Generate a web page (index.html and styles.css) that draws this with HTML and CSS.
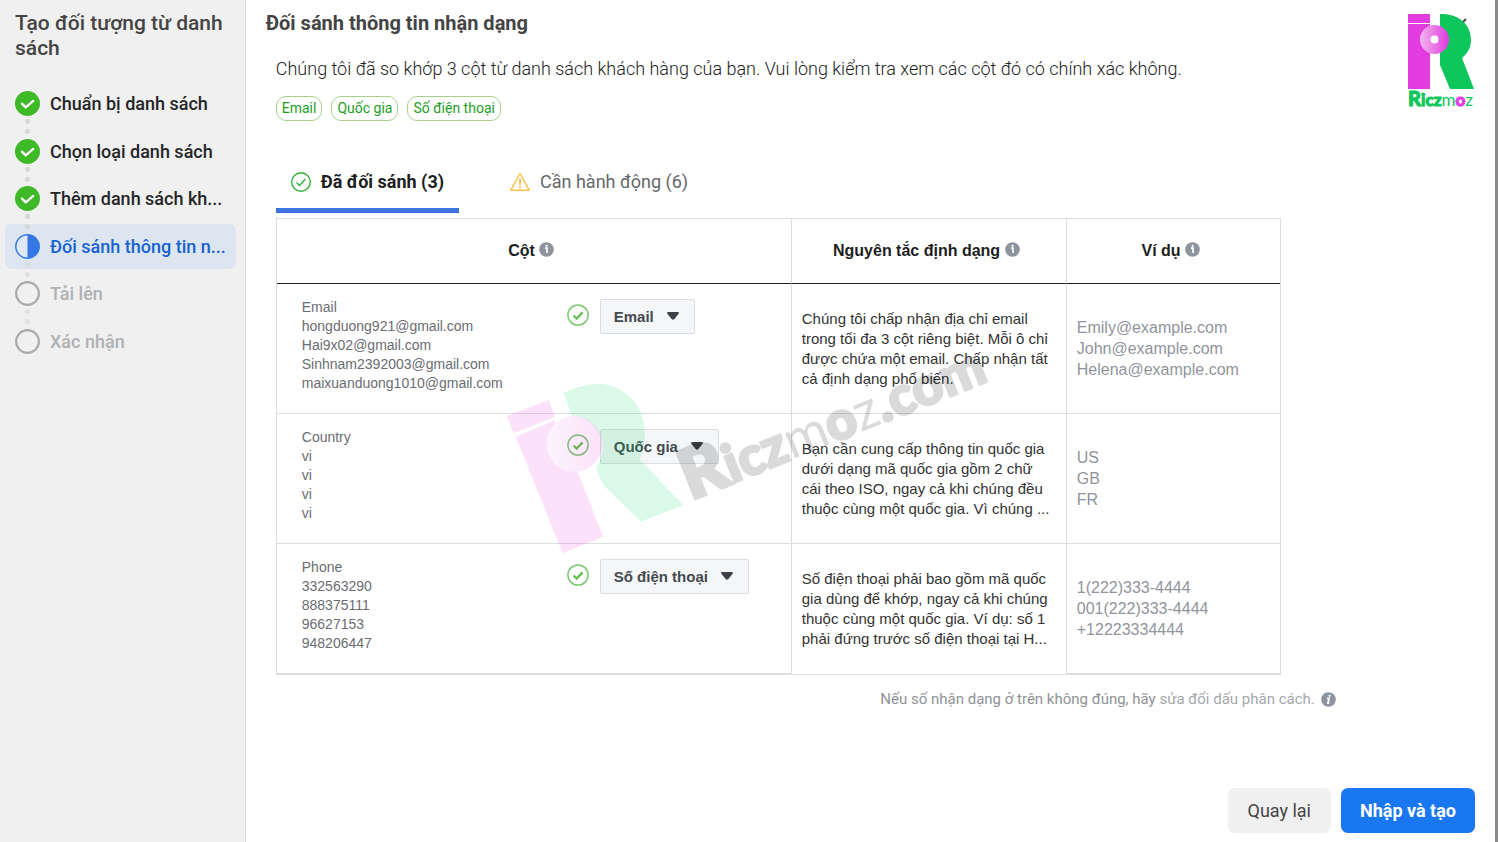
FILE: index.html
```html
<!DOCTYPE html>
<html lang="vi">
<head>
<meta charset="utf-8">
<meta name="viewport" content="width=device-width, initial-scale=1">
<title>Đối sánh thông tin nhận dạng</title>
<link rel="stylesheet" href="styles.css">
</head>
<body>
<svg class="defs" width="0" height="0" aria-hidden="true">
  <symbol id="done" viewBox="0 0 25 25"><circle cx="12.5" cy="12.5" r="12.5" fill="#3fb927"/><path d="M7 12.6l3.8 3.8 7.4-6.5" fill="none" stroke="#fff" stroke-width="2.3" stroke-linecap="round" stroke-linejoin="round"/></symbol>
  <symbol id="half" viewBox="0 0 25 25"><circle cx="12.5" cy="12.5" r="11.7" fill="#dfe9f7" stroke="#3578e5" stroke-width="1.5"/><path d="M12.5 0.8a11.7 11.7 0 0 1 0 23.4z" fill="#3578e5"/></symbol>
  <symbol id="todo" viewBox="0 0 25 25"><circle cx="12.5" cy="12.5" r="11.4" fill="none" stroke="#a9abae" stroke-width="2.2"/></symbol>
  <symbol id="info" viewBox="0 0 15 15"><circle cx="7.5" cy="7.5" r="7.3" fill="#8d949e"/><path d="M6 6.200h2v4.800" fill="none" stroke="#fff" stroke-width="1.700"/><circle cx="7.6" cy="3.8" r="1.1" fill="#fff"/></symbol>
  <symbol id="info-slant" viewBox="0 0 15 15"><circle cx="7.5" cy="7.5" r="7.3" fill="#8d949e"/><path d="M6 6.400h2l-1.100 4.800h1.400" fill="none" stroke="#fff" stroke-width="1.700"/><circle cx="8.600" cy="3.8" r="1.1" fill="#fff"/></symbol>
  <symbol id="ok" viewBox="0 0 22 22"><circle cx="11" cy="11" r="10.1" fill="none" stroke="#7cc873" stroke-width="1.5"/><path d="M6.6 11.5l3 3 6-6.2" fill="none" stroke="#67c253" stroke-width="2.4"/></symbol>
  <symbol id="caret" viewBox="0 0 12 8"><path d="M1.2 0h9.6q1.8.3.8 1.8L7.4 7.1q-1.4 1.4-2.8 0L.4 1.8Q-.6.3 1.2 0z" fill="#3d4046"/></symbol>
</svg>
<div class="app">
  <aside class="sidebar">
    <h2 class="sidebar-title">Tạo đối tượng từ danh sách</h2>
    <ol class="steps">
      <li class="step"><svg class="step-icon"><use href="#done"/></svg><span>Chuẩn bị danh sách</span></li>
      <li class="step"><svg class="step-icon"><use href="#done"/></svg><span>Chọn loại danh sách</span></li>
      <li class="step"><svg class="step-icon"><use href="#done"/></svg><span>Thêm danh sách kh...</span></li>
      <li class="step step-active" aria-current="step"><svg class="step-icon"><use href="#half"/></svg><span>Đối sánh thông tin n...</span></li>
      <li class="step step-next"><svg class="step-icon"><use href="#todo"/></svg><span>Tải lên</span></li>
      <li class="step step-next"><svg class="step-icon"><use href="#todo"/></svg><span>Xác nhận</span></li>
    </ol>
  </aside>
  <main class="main">
    <header class="header">
      <h1 class="title">Đối sánh thông tin nhận dạng</h1>
      <button class="close" type="button" aria-label="Đóng"><svg width="12" height="12" viewBox="0 0 12 12"><path d="M1 1l10 10M11 1L1 11" stroke="#444950" stroke-width="2"/></svg></button>
      <svg class="logo" width="70" height="96" viewBox="0 0 70 96" role="img" aria-label="Riczmoz">
        <defs><linearGradient id="disc"><stop offset="0" stop-color="#f3b5ef"/><stop offset="1" stop-color="#e03ade"/></linearGradient></defs>
        <path d="M0 2h22v9H0zM0 12h22v65H0z" fill="#e23be0"/>
        <path d="M31 2c18-1 32 9 32 26 0 7-3 13-9 18l12 31H42L32 53V2z" fill="#0dc65c"/>
        <circle cx="26.500" cy="27.500" r="14.500" fill="url(#disc)"/><circle cx="26.500" cy="27.500" r="4" fill="#fff"/>
        <text class="logo-text" y="94"><tspan class="logo-big">R</tspan><tspan class="logo-heavy">icz</tspan><tspan>m</tspan><tspan class="logo-heavy logo-pink">o</tspan><tspan>z</tspan></text>
      </svg>
    </header>
    <div class="content">
      <p class="intro">Chúng tôi đã so khớp 3 cột từ danh sách khách hàng của bạn. Vui lòng kiểm tra xem các cột đó có chính xác không.</p>
      <div class="tags"><span class="tag">Email</span><span class="tag">Quốc gia</span><span class="tag">Số điện thoại</span></div>
      <div class="tabs" role="tablist">
        <button class="tab tab-on" type="button" role="tab" aria-selected="true"><svg width="20" height="20" viewBox="0 0 20 20" fill="none" stroke="#31b237" stroke-width="1.4"><circle cx="10" cy="10" r="9.300"/><path d="M5.500 10.500l3 3 6-6.500"/></svg>Đã đối sánh (3)</button>
        <button class="tab" type="button" role="tab" aria-selected="false"><svg width="20" height="20" viewBox="0 0 20 20" fill="none" stroke="#f7c34b" stroke-width="1.5" stroke-linejoin="round"><path d="M10 1.500L19.200 18.200H.8z"/><path d="M10 6.500v6.500M10 14.300v2" stroke-width="1.800"/></svg>Cần hành động (6)</button>
      </div>
      <div class="table-area">
        <table class="table">
          <colgroup><col class="col-source"><col class="col-rule"><col></colgroup>
          <thead><tr>
            <th scope="col">Cột <svg class="info"><use href="#info"/></svg></th>
            <th scope="col">Nguyên tắc định dạng <svg class="info"><use href="#info"/></svg></th>
            <th scope="col">Ví dụ <svg class="info"><use href="#info"/></svg></th>
          </tr></thead>
          <tbody>
            <tr>
              <td class="source"><div class="source-row">
                <div class="values">Email<br>hongduong921@gmail.com<br>Hai9x02@gmail.com<br>Sinhnam2392003@gmail.com<br>maixuanduong1010@gmail.com</div>
                <svg class="ok"><use href="#ok"/></svg>
                <div class="picker"><select aria-label="Loại cột Email"><option>Email</option></select><svg class="caret"><use href="#caret"/></svg></div>
              </div></td>
              <td class="rule">Chúng tôi chấp nhận địa chỉ email<br>trong tối đa 3 cột riêng biệt. Mỗi ô chỉ<br>được chứa một email. Chấp nhận tất<br>cả định dạng phổ biến.</td>
              <td class="example">Emily@example.com<br>John@example.com<br>Helena@example.com</td>
            </tr>
            <tr>
              <td class="source"><div class="source-row">
                <div class="values">Country<br>vi<br>vi<br>vi<br>vi</div>
                <svg class="ok"><use href="#ok"/></svg>
                <div class="picker"><select aria-label="Loại cột Country"><option>Quốc gia</option></select><svg class="caret"><use href="#caret"/></svg></div>
              </div></td>
              <td class="rule">Bạn cần cung cấp thông tin quốc gia<br>dưới dạng mã quốc gia gồm 2 chữ<br>cái theo ISO, ngay cả khi chúng đều<br>thuộc cùng một quốc gia. Vì chúng ...</td>
              <td class="example">US<br>GB<br>FR</td>
            </tr>
            <tr>
              <td class="source"><div class="source-row">
                <div class="values">Phone<br>332563290<br>888375111<br>96627153<br>948206447</div>
                <svg class="ok"><use href="#ok"/></svg>
                <div class="picker"><select aria-label="Loại cột Phone"><option>Số điện thoại</option></select><svg class="caret"><use href="#caret"/></svg></div>
              </div></td>
              <td class="rule">Số điện thoại phải bao gồm mã quốc<br>gia dùng để khớp, ngay cả khi chúng<br>thuộc cùng một quốc gia. Ví dụ: số 1<br>phải đứng trước số điện thoại tại H...</td>
              <td class="example">1(222)333-4444<br>001(222)333-4444<br>+12223334444</td>
            </tr>
          </tbody>
        </table>
        <svg class="watermark" width="530" height="210" viewBox="0 -60 1590 630" aria-hidden="true">
          <linearGradient id="pale"><stop offset="0" stop-color="#e23be0" stop-opacity=".4"/><stop offset="1" stop-color="#e23be0"/></linearGradient>
          <g fill="#e23be0" fill-opacity=".15">
            <path d="M78 138L203 90L222 140L98 190z"/>
            <path d="M104 200L222 150V161A84 84 0 0 0 290 305L366 500L245 550z"/>
            <circle cx="280" cy="222" r="84" fill="url(#pale)"/>
          </g>
          <path d="M248 68C300 45 340 40 370 43C450 55 500 130 490 210Q488 245 475 268L607 405L480 455L372 350Q355 325 345 292Q372 255 363 210C350 165 310 135 272 137z" fill="#10d565" fill-opacity=".15"/>
          <text class="mark-text" transform="translate(630 390) rotate(-21.800)"><tspan class="mark-big">R</tspan><tspan class="mark-heavy">icz</tspan><tspan>m</tspan><tspan class="mark-heavy">o</tspan><tspan>z</tspan><tspan class="mark-heavy">.com</tspan></text>
        </svg>
      </div>
      <p class="note"><span>Nếu số nhận dạng ở trên không đúng, hãy <a href="#">sửa đổi dấu phân cách.</a></span><svg class="info"><use href="#info-slant"/></svg></p>
    </div>
    <footer class="footer">
      <button class="btn" type="button">Quay lại</button>
      <button class="btn btn-primary" type="button">Nhập và tạo</button>
    </footer>
  </main>
</div>
</body>
</html>
```
FILE: styles.css
```css
* { box-sizing: border-box; }
body { margin: 0; background: #fff; color: #1c1e21; font-family: Roboto, sans-serif; }
h1, h2, p, ol { margin: 0; padding: 0; }
button, select { font: inherit; border: 0; background: none; }
.defs { position: absolute; }
.app { display: flex; min-height: 100vh; border-right: 3px solid #8b8b8b; }

.sidebar { flex: 0 0 245px; background: #f0f0f0; border-right: 1px solid #dcdcdc; padding: 11px 9px 0 5px; }
.sidebar-title { padding: 0 10px; font-size: 21px; line-height: 25px; font-weight: 500; color: #444; }
.steps { display: flex; flex-direction: column; justify-content: space-between; height: 283px; margin-top: 20px; list-style: none; }
.step { position: relative; display: flex; align-items: center; gap: 10px; height: 45px; padding: 0 10px; border-radius: 7px; font-size: 18px; font-weight: 500; color: #242628; white-space: nowrap; }
.step-icon { flex: none; width: 25px; height: 25px; }
.step-active { background: #dce5f0; color: #1763cf; }
.step-next { color: #afb1b3; }
.step:not(:last-child)::after { content: ""; position: absolute; z-index: 1; left: 20px; top: 38px; width: 5px; height: 15px; background: radial-gradient(circle at 50% 50%, #d5d6d8 2px, transparent 3px) 0 0 / 5px 5px no-repeat, radial-gradient(circle at 50% 50%, #d5d6d8 2px, transparent 3px) 0 10px / 5px 5px no-repeat; }
.step-active::after, .step-next::after { opacity: .6; }

.main { flex: 1; min-width: 0; display: flex; flex-direction: column; }
.header { position: relative; display: flex; justify-content: space-between; padding: 11px 20px 0; }
.title { font-size: 20px; line-height: 25px; font-weight: 700; color: #444; }
.close { padding: 5px 8px; line-height: 0; }
.logo { position: absolute; right: 17px; top: 12px; overflow: visible; }
.logo-text { font: 17px Lato, sans-serif; fill: #0dc65c; }
.logo-heavy { font-weight: 900; stroke: #0dc65c; stroke-width: 1px; }
.logo-big { font-size: 20px; font-weight: 900; stroke: #0dc65c; stroke-width: 1px; }
.logo-pink { fill: #e23be0; stroke: #e23be0; }

.content { width: 100%; max-width: 1120px; padding: 20px 30px 0; }
.intro { font-size: 18px; line-height: 26px; font-weight: 300; color: #222; }
.tags { display: flex; gap: 9px; margin-top: 14px; }
.tag { height: 25px; padding: 0 5px; border: 1px solid #a5d18c; border-radius: 10px; font-size: 14px; line-height: 22px; color: #1ca01f; }
.tabs { display: flex; gap: 36px; margin-top: 30px; }
.tab { display: flex; align-items: center; gap: 10px; height: 62px; padding: 4px 15px 0; border-bottom: 5px solid transparent; font-size: 18px; color: #65686c; }
.tab-on { border-color: #3b74df; font-weight: 700; color: #1c1e21; }

.table-area { position: relative; max-width: 1005px; margin-top: 5px; }
.table { width: 100%; table-layout: fixed; border: 1px solid #dadde1; border-spacing: 0; font-family: "Liberation Sans", Arial, sans-serif; }
.col-source { width: 514px; }
.col-rule { width: 275px; }
.table th { height: 65px; padding: 0 5px 0 0; border-bottom: 1px solid #1c1e21; font-size: 16px; font-weight: 700; }
.table td { height: 130px; padding: 0 10px; border-bottom: 1px solid #dadde1; }
.table tr > * + * { border-left: 1px solid #dadde1; }
.table tr:last-child .rule { border-bottom: 0; }
.info { flex: none; width: 15px; height: 15px; vertical-align: -1px; }
.table .source { vertical-align: top; padding: 14px 25px 0; }
.source-row { display: flex; align-items: flex-start; }
.values { width: 265px; font-size: 14px; line-height: 19px; color: #6a6d72; }
.ok { width: 22px; height: 22px; margin: 6px 11px 0 0; }
.picker { position: relative; margin-top: 1px; }
.picker select { appearance: none; height: 35px; padding: 0 39px 1px 13px; border: 1px solid #dadde1; border-radius: 2px; background: #f5f6f7; font-size: 15px; font-weight: 700; color: #444950; }
.caret { position: absolute; right: 16px; top: 13px; width: 12px; height: 8px; pointer-events: none; }
.rule { font-size: 15px; line-height: 20px; color: #333; white-space: nowrap; }
.example { font-size: 16px; line-height: 21px; color: #90949c; }
.watermark { position: absolute; left: 205px; top: 132px; overflow: visible; pointer-events: none; }
.mark-text { font: 160px Lato, sans-serif; fill: #000; opacity: .14; }
.mark-heavy { font-weight: 900; stroke: #000; stroke-width: 8px; }
.mark-big { font-size: 204px; font-weight: 900; stroke: #000; stroke-width: 12px; }

.note { display: flex; justify-content: flex-end; align-items: center; gap: 6px; margin-top: 14px; font-size: 15px; line-height: 20px; color: #8f9296; }
.note a { color: #a5a8ac; text-decoration: none; }
.footer { display: flex; justify-content: flex-end; gap: 10px; margin-top: auto; padding: 20px 20px 9px; }
.btn { height: 45px; padding: 0 20px; border-radius: 7px; background: #f0f0f0; font-size: 18px; color: #444; }
.btn-primary { padding: 0 19px; background: #1a77f2; color: #fff; font-weight: 700; }
```
